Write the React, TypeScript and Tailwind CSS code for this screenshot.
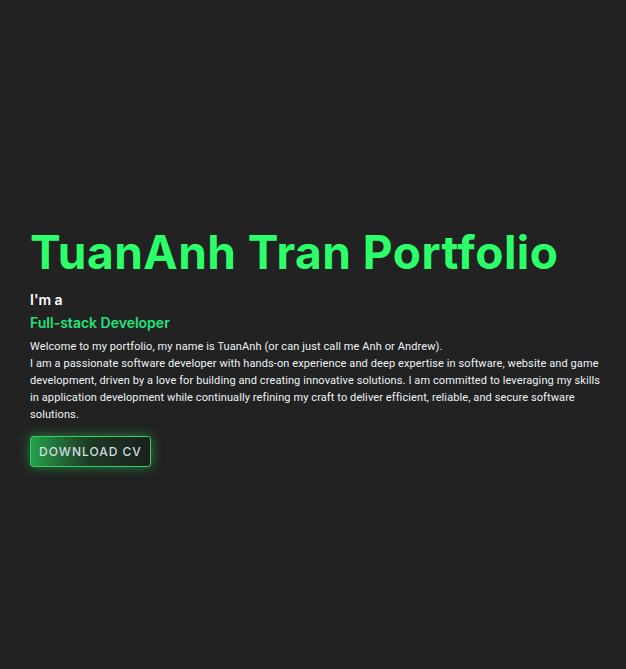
const App = () => {
	return (
		<main className="min-h-screen w-full bg-[#222222] font-['Inter',sans-serif]">
			<section className="flex flex-col px-[30px] pt-[224px] pr-[24px]">
				<h1 className="text-[46px] leading-[56px] font-bold text-[#2cff6a] tracking-[0.5px]">
					TuanAnh Tran Portfolio
				</h1>

				<p className="mt-[10px] text-[14px] leading-[20px] font-semibold text-white">I'm a</p>
				<p className="mt-[3px] text-[14px] leading-[20px] font-semibold text-[#22e27a]">Full-stack Developer</p>

				<div className="mt-[5px] font-['Roboto',sans-serif] text-[11px] leading-[17px] tracking-[0.1px] text-[#eef3f7]">
					<p>Welcome to my portfolio, my name is TuanAnh (or can just call me Anh or Andrew).</p>
					<p>
						I am a passionate software developer with hands-on experience and deep expertise in software, website and game
						development, driven by a love for building and creating innovative solutions. I am committed to leveraging my skills
						in application development while continually refining my craft to deliver efficient, reliable, and secure software
						solutions.
					</p>
				</div>

				<div className="mt-[13px]">
					<button className="h-[31px] w-[121px] rounded-[3px] border border-[#2ed25e] bg-gradient-to-r from-[#23a04a] via-[#1b3a24] to-[#1c1f1d] text-[12px] font-medium tracking-[1px] text-[#d4dce0] shadow-[0_0_12px_rgba(46,210,94,0.55)]">
						DOWNLOAD CV
					</button>
				</div>
			</section>
		</main>
	)
}

export default App
